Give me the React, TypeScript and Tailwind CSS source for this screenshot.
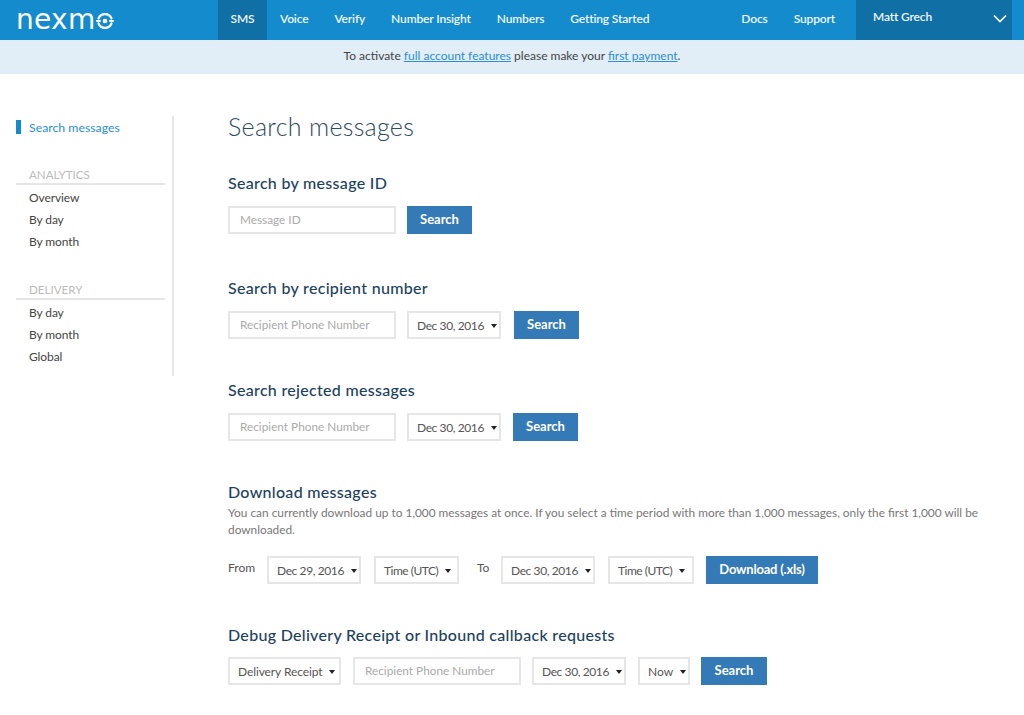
import { ReactNode } from "react";

const navLeft = ["Voice", "Verify", "Number Insight", "Numbers", "Getting Started"];

const Caret = () => (
  <span className="ml-[7px] inline-block h-0 w-0 border-x-[3.5px] border-t-[4px] border-x-transparent border-t-[#222]" />
);

const Dropdown = ({ label, className }: { label: string; className: string }) => (
  <div className={`flex h-[28px] shrink-0 items-center border-2 border-[#e6e6e6] pt-[2px] pl-[8px] text-[12px] text-[#555] ${className}`}>
    {label}
    <Caret />
  </div>
);

const TextBox = ({ placeholder, className }: { placeholder: string; className: string }) => (
  <div className={`flex h-[28px] w-[168px] shrink-0 items-center border-2 border-[#e6e6e6] pl-[10px] text-[11.8px] text-[#aaa] ${className}`}>
    {placeholder}
  </div>
);

const Button = ({ label, className }: { label: string; className: string }) => (
  <div className={`flex h-[28px] shrink-0 items-center justify-center bg-[#337ab7] text-[13px] font-bold text-white ${className}`}>
    {label}
  </div>
);

const Section = ({ title, className, children }: { title: string; className: string; children: ReactNode }) => (
  <section className={className}>
    <h2 className="text-[16px] leading-[18px] font-medium tracking-[0.3px] text-[#1c4160]">{title}</h2>
    {children}
  </section>
);

const SideGroup = ({ title, items, className }: { title: string; items: string[]; className: string }) => (
  <div className={className}>
    <div className="border-b-2 border-[#e6e6e6] pl-[13px] text-[11.6px] leading-[17px] text-[#bbb]">{title}</div>
    <ul className="mt-[2px] pl-[13px] text-[12px] tracking-[-0.1px] text-[#444]">
      {items.map((item) => (
        <li key={item} className="flex h-[22px] items-center">{item}</li>
      ))}
    </ul>
  </div>
);

export default function App() {
  return (
    <div className="h-[715px] overflow-hidden bg-white font-['Lato',sans-serif]">
      <header className="flex h-[40px] bg-[#148bcd] text-[12px] font-semibold tracking-[-0.15px] text-[#eef7fc]">
        <div className="flex w-[218px] items-center pl-[16px] text-white">
          <span className="font-['DejaVu_Sans',sans-serif] text-[28px] leading-[36px] font-normal tracking-[0.3px]">nexm</span>
          <svg width="18" height="18" viewBox="0 0 18 18" fill="none" className="mt-[1px]">
            <path d="M2.5 6.5A7 7 0 0 1 15.5 6.5M2.5 11.5A7 7 0 0 0 15.5 11.5" stroke="white" strokeWidth="2.2" strokeLinecap="round" />
            <circle cx="9" cy="9" r="2.3" fill="white" />
            <path d="M1 9H4M14 9h3" stroke="white" strokeWidth="2" strokeLinecap="round" />
          </svg>
        </div>
        <div className="flex w-[49px] items-center justify-center bg-[#106fa5] pb-[2px]">SMS</div>
        <nav className="flex items-center gap-[26px] pb-[2px] pl-[13px]">
          {navLeft.map((item) => (
            <span key={item}>{item}</span>
          ))}
        </nav>
        <nav className="ml-auto flex items-center gap-[26px] pb-[2px]">
          <span>Docs</span>
          <span>Support</span>
        </nav>
        <div className="mr-[12px] ml-[21px] flex w-[156px] items-center justify-between bg-[#106fa5] pr-[5px] pb-[6px] pl-[17px]">
          <span>Matt Grech</span>
          <svg width="14" height="9" viewBox="0 0 14 9" fill="none" className="mt-[3px]">
            <path d="M1 1.5l6 6 6-6" stroke="white" strokeWidth="1.6" />
          </svg>
        </div>
      </header>

      <div className="flex h-[34px] items-center justify-center bg-[#e1edf7] pb-[2px] text-[12px] text-[#444]">
        <span>
          To activate <a className="text-[#2d8fd0] underline">full account features</a> please make your{" "}
          <a className="text-[#2d8fd0] underline">first payment</a>.
        </span>
      </div>

      <div className="flex pt-[42px]">
        <aside className="ml-[16px] h-[260px] w-[158px] shrink-0 border-r-2 border-[#e6e6e6] pr-[7px]">
          <div className="mt-[4px] flex h-[14px] items-center border-l-[5px] border-[#148bcd] pt-[3px] pl-[8px] text-[12.3px] text-[#2d8fd0]">
            Search messages
          </div>
          <SideGroup className="mt-[32px]" title="ANALYTICS" items={["Overview", "By day", "By month"]} />
          <SideGroup className="mt-[28px]" title="DELIVERY" items={["By day", "By month", "Global"]} />
        </aside>

        <main className="ml-[54px] w-[760px]">
          <h1 className="-mt-[2px] text-[25px] leading-[24px] font-light tracking-[0.3px] text-[#2f4a60]">Search messages</h1>

          <Section title="Search by message ID" className="mt-[36px]">
            <div className="mt-[14px] flex gap-[11px]">
              <TextBox placeholder="Message ID" className="" />
              <Button label="Search" className="w-[65px]" />
            </div>
          </Section>

          <Section title="Search by recipient number" className="mt-[45px]">
            <div className="mt-[14px] flex">
              <TextBox placeholder="Recipient Phone Number" className="mr-[11px]" />
              <Dropdown label="Dec 30, 2016" className="mr-[13px] w-[94px] tracking-[-0.4px]" />
              <Button label="Search" className="w-[65px]" />
            </div>
          </Section>

          <Section title="Search rejected messages" className="mt-[42px]">
            <div className="mt-[14px] flex">
              <TextBox placeholder="Recipient Phone Number" className="mr-[11px]" />
              <Dropdown label="Dec 30, 2016" className="mr-[12px] w-[94px] tracking-[-0.4px]" />
              <Button label="Search" className="w-[65px]" />
            </div>
          </Section>

          <Section title="Download messages" className="mt-[42px]">
            <p className="mt-[3px] text-[11.85px] leading-[17px] text-[#777]">
              You can currently download up to 1,000 messages at once. If you select a time period with more than 1,000 messages, only the first 1,000 will be downloaded.
            </p>
            <div className="mt-[18px] flex items-start text-[12px] text-[#555]">
              <span className="mt-[3px] w-[39px] shrink-0">From</span>
              <Dropdown label="Dec 29, 2016" className="mr-[13px] w-[94px] tracking-[-0.4px]" />
              <Dropdown label="Time (UTC)" className="w-[85px] tracking-[-0.5px]" />
              <span className="mt-[3px] ml-[18px] w-[24px] shrink-0">To</span>
              <Dropdown label="Dec 30, 2016" className="mr-[13px] w-[94px] tracking-[-0.4px]" />
              <Dropdown label="Time (UTC)" className="mr-[12px] w-[86px] tracking-[-0.5px]" />
              <Button label="Download (.xls)" className="w-[112px] tracking-[-0.2px]" />
            </div>
          </Section>

          <Section title="Debug Delivery Receipt or Inbound callback requests" className="mt-[42px]">
            <div className="mt-[13px] flex">
              <Dropdown label="Delivery Receipt" className="mr-[12px] w-[113px] tracking-[-0.1px]" />
              <TextBox placeholder="Recipient Phone Number" className="mr-[11px]" />
              <Dropdown label="Dec 30, 2016" className="mr-[12px] w-[94px] tracking-[-0.4px]" />
              <Dropdown label="Now" className="mr-[11px] w-[52px]" />
              <Button label="Search" className="w-[66px]" />
            </div>
          </Section>
        </main>
      </div>
    </div>
  );
}
